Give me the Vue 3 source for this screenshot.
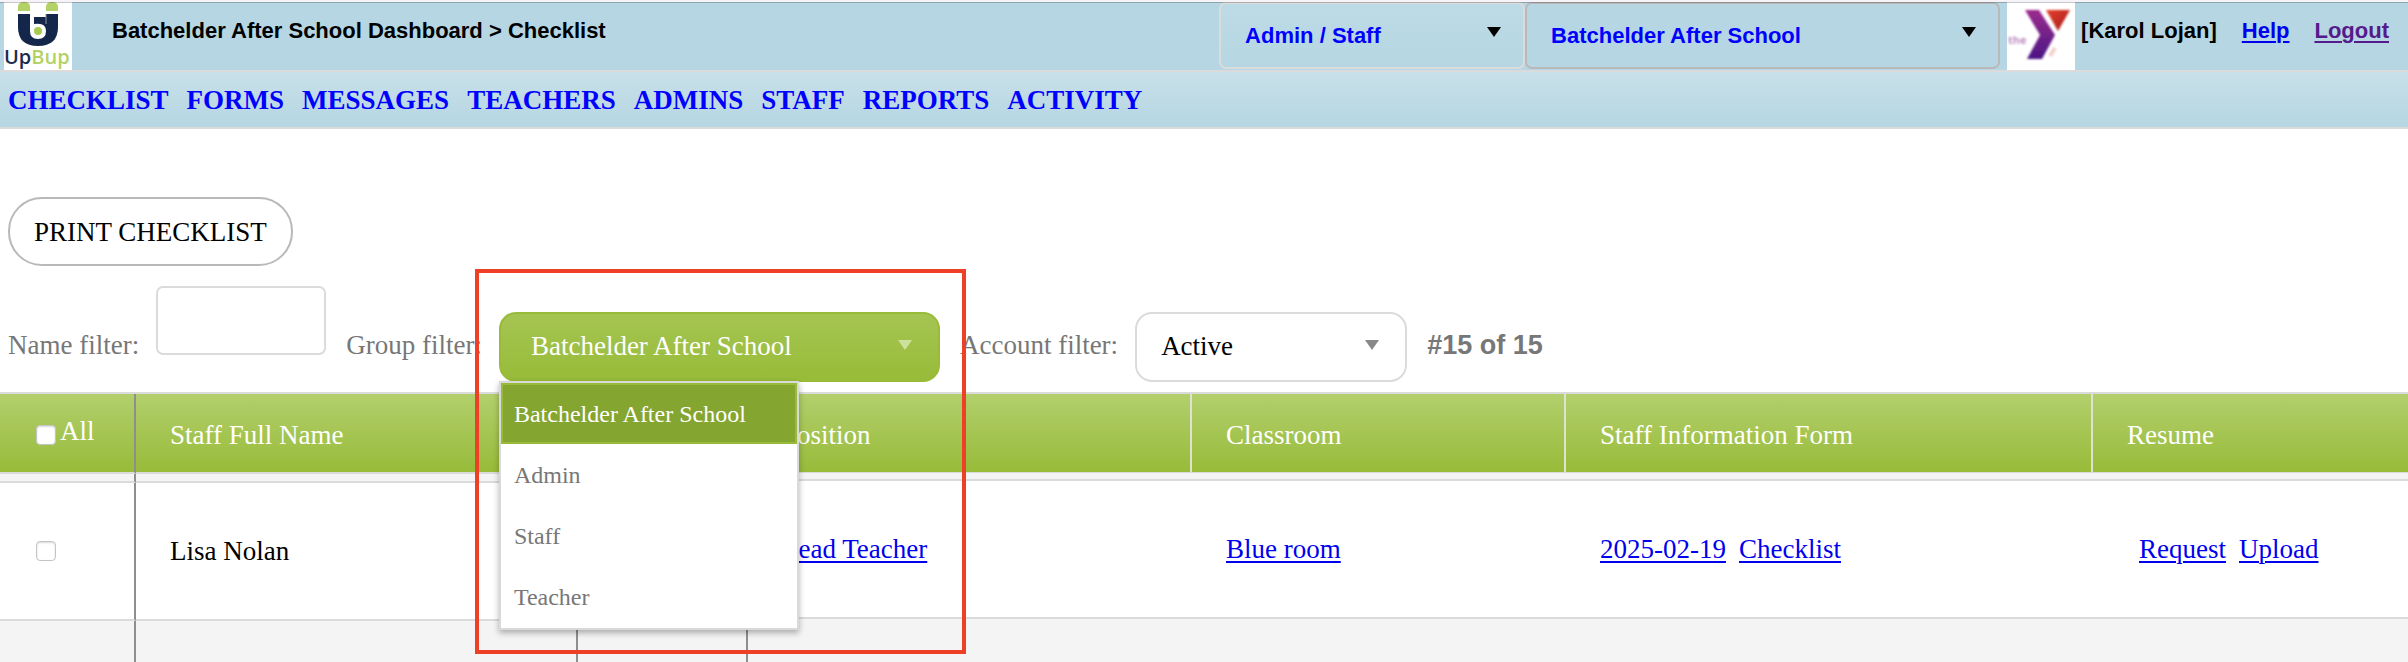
<script setup>
import { ref } from 'vue'

const navItems = ['CHECKLIST', 'FORMS', 'MESSAGES', 'TEACHERS', 'ADMINS', 'STAFF', 'REPORTS', 'ACTIVITY']
const groups = ['Batchelder After School', 'Admin', 'Staff', 'Teacher']
const group = ref(groups[0])
const name = ref('')
</script>

<template>
  <div class="page">
    <header class="topbar">
      <a class="logo logo-upbup" href="#" aria-label="UpBup">
        <svg viewBox="0 0 68 68" width="68" height="68">
          <rect width="68" height="68" fill="#fff" />
          <path d="M14 9V5Q14 0 20 0T26 5V9ZM42 9V5Q42 0 48 0T54 5V9Z" fill="#b3d265" />
          <path d="M14 12H54V25Q54 44 34 44T14 25Z" fill="#14264a" />
          <path d="M26 12H42V15H30V22Q42 20 42 29Q42 37 34 37T26 29Z" fill="#fff" />
          <path d="M42 12V22" stroke="#8a93a6" stroke-width="1" />
          <circle cx="34" cy="29" r="4" fill="#a9cc4e" />
          <text class="brand" x="0" y="62"><tspan fill="#1c2c50">Up</tspan><tspan fill="#b3d265">Bup</tspan></text>
        </svg>
      </a>
      <h1 class="title">Batchelder After School Dashboard &gt; Checklist</h1>
      <div class="select role-select">
        <select aria-label="Role">
          <option>Admin / Staff</option>
        </select>
      </div>
      <div class="select site-select">
        <select aria-label="Site">
          <option>Batchelder After School</option>
        </select>
      </div>
      <div class="logo logo-y">
        <svg viewBox="0 0 68 68" width="68" height="68" role="img" aria-label="the Y">
          <defs>
            <linearGradient id="purple" x1="0" y1="0" x2="0" y2="1">
              <stop offset="0" stop-color="#9b2c8e" />
              <stop offset="1" stop-color="#4b1684" />
            </linearGradient>
            <linearGradient id="red" x1="0" y1="0" x2="1" y2="1">
              <stop offset="0" stop-color="#e8402c" />
              <stop offset="1" stop-color="#a01d1c" />
            </linearGradient>
            <filter id="soft"><feGaussianBlur stdDeviation="0.8" /></filter>
          </defs>
          <rect width="68" height="68" fill="#fff" />
          <g filter="url(#soft)">
            <path d="M18 8H32L48 33L35 57H20L33 33Z" fill="url(#purple)" />
            <path d="M39 8H63L51 29Z" fill="url(#red)" />
            <path d="M48 46L43 54" stroke="#f3cfca" stroke-width="4" />
            <text class="the" x="1" y="42">the</text>
          </g>
        </svg>
      </div>
      <div class="account">
        <span>[Karol Lojan]</span>
        <a href="#">Help</a>
        <a class="visited" href="#">Logout</a>
      </div>
    </header>

    <nav class="nav">
      <a v-for="item in navItems" :key="item" href="#">{{ item }}</a>
    </nav>

    <main>
      <button class="print" type="button">PRINT CHECKLIST</button>

      <form class="filters" @submit.prevent>
        <div class="field">
          <label for="name-filter">Name filter:</label>
          <input id="name-filter" v-model="name" type="text" />
        </div>
        <div class="field">
          <label for="group-filter">Group filter:</label>
          <div class="select group-select">
            <select id="group-filter" v-model="group">
              <option v-for="g in groups" :key="g">{{ g }}</option>
            </select>
            <ul class="menu">
              <li v-for="g in groups" :key="g">
                <button type="button" :class="{ active: g === group }" @click="group = g">{{ g }}</button>
              </li>
            </ul>
            <div class="highlight"></div>
          </div>
        </div>
        <div class="field">
          <label for="account-filter">Account filter:</label>
          <div class="select account-select">
            <select id="account-filter">
              <option>Active</option>
            </select>
          </div>
        </div>
        <output class="count">#15 of 15</output>
      </form>

      <div class="tables">
        <table class="frozen">
          <colgroup><col class="c-check" /><col class="c-name" /><col class="c-extra" /></colgroup>
          <thead>
            <tr>
              <th class="check"><label><input type="checkbox" />All</label></th>
              <th>Staff Full Name</th>
              <th></th>
            </tr>
          </thead>
          <tbody>
            <tr class="gutter"><td></td><td></td><td></td></tr>
            <tr class="row">
              <td class="check"><input type="checkbox" aria-label="Select Lisa Nolan" /></td>
              <td>Lisa Nolan</td>
              <td></td>
            </tr>
            <tr class="next"><td></td><td></td><td></td></tr>
          </tbody>
        </table>
        <table class="details">
          <colgroup><col class="c-position" /><col class="c-room" /><col class="c-form" /><col /></colgroup>
          <thead>
            <tr>
              <th>Position</th>
              <th>Classroom</th>
              <th>Staff Information Form</th>
              <th>Resume</th>
            </tr>
          </thead>
          <tbody>
            <tr class="gutter"><td></td><td></td><td></td><td></td></tr>
            <tr class="row">
              <td><a href="#">Lead Teacher</a></td>
              <td><a href="#">Blue room</a></td>
              <td><div class="links"><a href="#">2025-02-19</a><a href="#">Checklist</a></div></td>
              <td><div class="links resume"><a href="#">Request</a><a href="#">Upload</a></div></td>
            </tr>
            <tr class="next"><td></td><td></td><td></td><td></td></tr>
          </tbody>
        </table>
      </div>
    </main>
  </div>
</template>

<style>
body {
  margin: 0;
  background: #fff;
}
</style>

<style scoped>
.page {
  font-family: "Liberation Serif", "Times New Roman", serif;
  font-size: 27px;
  line-height: 30px;
  color: #000;
  overflow: hidden;
}
.page *,
.page *::before,
.page *::after {
  box-sizing: border-box;
}
a {
  color: #0000ee;
  text-decoration-thickness: 2px;
  text-underline-offset: 3px;
}

/* Top bar */
.topbar {
  position: relative;
  display: flex;
  height: 72px;
  padding-left: 4px;
  border-top: 2px solid #f6f4f9;
  border-bottom: 2px solid #dbdbdb;
  background: #b5d6e2;
  font: bold 22px/26px "Liberation Sans", Arial, sans-serif;
}
.topbar::after {
  content: "";
  position: absolute;
  inset: 0 0 auto;
  height: 1px;
  background: rgba(0, 0, 0, 0.22);
}
.logo {
  flex: none;
  width: 68px;
  height: 68px;
}
.logo svg {
  display: block;
}
.brand {
  font: 600 20px "Open Sans", sans-serif;
}
.the {
  font: bold 11px "Open Sans", sans-serif;
  fill: #c08fc4;
}
.title {
  flex: 1;
  margin: 0;
  padding: 16px 0 0 40px;
  font: inherit;
}
.topbar .select {
  height: 67px;
}
.topbar select {
  padding: 0 24px;
  border-radius: 7px;
  color: #0000ff;
}
.role-select {
  width: 306px;
}
.topbar .role-select select {
  border-color: #dbdbdb;
  background: linear-gradient(#bddbe6, #b5d6e2);
}
.site-select {
  width: 475px;
  margin-right: 7px;
}
.topbar .site-select select {
  border-color: #b9b9b9;
  background: #b5d6e2;
}
.account {
  display: flex;
  gap: 25px;
  padding: 16px 19px 0 6px;
  white-space: nowrap;
}
.account .visited {
  color: #551a8b;
}

/* Shared drop-down look */
.select {
  position: relative;
  flex: none;
}
.select select {
  appearance: none;
  width: 100%;
  height: 100%;
  margin: 0;
  border: 2px solid #dbdbdb;
  font: inherit;
}
.select::after {
  content: "";
  position: absolute;
  top: 25px;
  right: 24px;
  border: 7px solid transparent;
  border-top: 10px solid #000;
  border-bottom: 0;
  pointer-events: none;
}

/* Navigation */
.nav {
  display: flex;
  align-items: center;
  gap: 18px;
  height: 57px;
  padding-left: 8px;
  border-bottom: 2px solid #dbdbdb;
  background: linear-gradient(#c8e0e9, #b5d6e2);
  font-weight: bold;
}
.nav a {
  color: #0000ff;
  text-decoration: none;
}

/* Filters */
.print {
  display: block;
  height: 69px;
  margin: 68px 0 0 8px;
  padding: 0 24px;
  border: 2px solid #b9b9b9;
  border-radius: 34px;
  background: #fff;
  color: #000;
  font: inherit;
}
.filters {
  display: flex;
  align-items: flex-end;
  gap: 20px;
  margin: 20px 0 10px 8px;
  color: #777;
}
.field {
  display: flex;
  align-items: flex-end;
  gap: 17px;
}
.field label,
.count {
  padding-bottom: 22px;
  white-space: nowrap;
}
.field input {
  width: 170px;
  height: 69px;
  margin: 0 0 27px;
  padding: 0 16px;
  border: 2px solid #dbdbdb;
  border-radius: 7px;
  font: inherit;
}
.field .select {
  height: 70px;
}
.field select {
  padding: 0 24px 2px;
  border-radius: 17px;
}
.field .select::after {
  top: 28px;
  right: 28px;
  border-top-color: #888;
}
.group-select {
  width: 441px;
}
.field .group-select select {
  padding-left: 30px;
  border-color: #98bb39;
  background: linear-gradient(#a5c552, #98bb39);
  color: #fff;
}
.field .group-select::after {
  border-top-color: #cde09c;
}
.account-select {
  width: 272px;
}
.account-select select {
  background: #fff;
  color: #000;
}
.count {
  font-family: "Liberation Sans", Arial, sans-serif;
  font-weight: bold;
}

/* Open list and callout frame */
.menu {
  position: absolute;
  z-index: 2;
  top: 69px;
  left: 0;
  width: 300px;
  margin: 0;
  padding: 0 0 1px;
  border: 2px solid #d9d9d9;
  background: #fff;
  box-shadow: 0 3px 6px rgba(0, 0, 0, 0.3);
  list-style: none;
}
.menu button {
  display: block;
  width: 100%;
  height: 61px;
  padding: 0 11px;
  border: 2px solid transparent;
  background: none;
  color: #777;
  font: inherit;
  font-size: 24px;
  text-align: left;
}
.menu .active {
  border-color: #98bb39;
  background: #84a52f;
  color: #fff;
}
.highlight {
  position: absolute;
  z-index: 3;
  top: -43px;
  left: -24px;
  width: 491px;
  height: 385px;
  border: 4px solid #ee4026;
  pointer-events: none;
}

/* Checklist */
.tables {
  display: flex;
  align-items: flex-start;
  border-top: 2px solid #dbdbdb;
  background: #f4f4f4;
}
table {
  table-layout: fixed;
  border-collapse: separate;
  border-spacing: 0;
}
.frozen {
  width: 748px;
}
.details {
  flex: 1;
  width: 0;
}
.c-check { width: 136px; }
.c-name { width: 442px; }
.c-extra { width: 170px; }
.c-position { width: 444px; }
.c-room { width: 374px; }
.c-form { width: 527px; }
th,
td {
  padding: 0 0 0 34px;
  text-align: left;
  font-weight: normal;
}
th {
  height: 80px;
  padding-top: 3px;
  border-bottom: 2px solid #dbdbdb;
  background: linear-gradient(#b2cf6d, #98bb39) padding-box;
  color: #fff;
}
.details th {
  height: 79px;
  border-bottom-width: 1px;
}
.details th:not(:last-child) {
  border-right: 2px solid #dde3cf;
}
.frozen th:first-child,
.frozen td {
  border-right: 2px solid #8e8e8e;
}
.gutter td {
  height: 9px;
  border-bottom: 2px solid #dbdbdb;
}
.details .gutter td {
  height: 8px;
}
.row td {
  height: 138px;
  border-bottom: 2px solid #dbdbdb;
  background: #fff;
}
.next td {
  height: 41px;
}
.details .next td {
  height: 43px;
}
.check label {
  display: flex;
  align-items: center;
  gap: 4px;
  padding-bottom: 7px;
}
.check label input {
  position: relative;
  top: 4px;
}
.check input {
  appearance: none;
  display: block;
  width: 20px;
  height: 20px;
  margin: 0 0 0 2px;
  border: 1px solid #c4c4c4;
  border-radius: 4px;
  background: #fff;
  box-shadow: inset 0 1px 2px rgba(0, 0, 0, 0.15);
}
.links {
  display: flex;
  gap: 13px;
}
.resume {
  padding-left: 12px;
}
</style>
